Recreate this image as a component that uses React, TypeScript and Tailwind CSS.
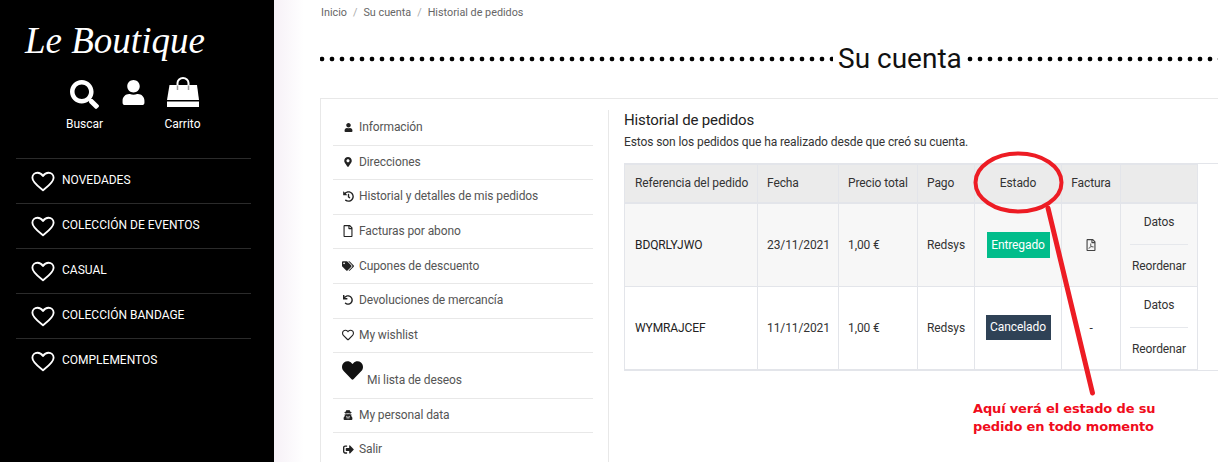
import { FaSearch, FaUser, FaHistory, FaRegFile, FaTags, FaUndo, FaRegHeart, FaHeart, FaUserSecret, FaSignOutAlt, FaRegFilePdf, FaMapMarkerAlt } from "react-icons/fa";

const nav = ["NOVEDADES", "COLECCIÓN DE EVENTOS", "CASUAL", "COLECCIÓN BANDAGE", "COMPLEMENTOS"];

function OutlineHeart() {
  return (
    <svg width="24" height="21" viewBox="0 0 26 22" className="shrink-0">
      <path d="M13 20.500C8 16.500 1.500 12 1.500 7 1.500 3.800 4 1.500 7 1.500c2.600 0 4.600 1.400 6 3.600 1.400-2.200 3.400-3.600 6-3.600 3 0 5.500 2.300 5.500 5.500 0 5-6.500 9.500-11.500 13.500z" fill="none" stroke="#fff" strokeWidth="2" strokeLinejoin="round" />
    </svg>
  );
}

function Bag() {
  return (
    <svg width="32" height="30" viewBox="0 0 32 30">
      <path d="M10.500 9V6a5.500 5 0 0 1 11 0v3" fill="none" stroke="#fff" strokeWidth="2" />
      <path d="M2.500 8H30l2 15H0z" fill="#fff" />
      <path d="M10.500 8.500V13M21.500 8.500V13" stroke="#999" strokeWidth="1.500" />
      <rect x="0" y="24.500" width="32" height="5.500" fill="#fff" />
    </svg>
  );
}

const menu = [
  { icon: <FaUser size={9} />, label: "Información", h: "h-[35px] pb-[2px]" },
  { icon: <FaMapMarkerAlt size={10} />, label: "Direcciones", h: "h-[34px] pb-[2px]" },
  { icon: <FaHistory size={11} />, label: "Historial y detalles de mis pedidos", h: "h-[35px] pb-[2px]" },
  { icon: <FaRegFile size={12} />, label: "Facturas por abono", h: "h-[34px] pb-[2px]" },
  { icon: <FaTags size={12} />, label: "Cupones de descuento", h: "h-[35px]" },
  { icon: <FaUndo size={10} />, label: "Devoluciones de mercancía", h: "h-[35px] pb-[2px]" },
  { icon: <FaRegHeart size={12} />, label: "My wishlist", h: "h-[34px] pb-[2px]" },
];

function Status({ label, cls }: { label: string; cls: string }) {
  return <span className={`inline-block text-white text-center ${cls}`}>{label}</span>;
}

function Actions() {
  return (
    <td className="border border-[#e3e5ea] p-0 px-[9px] text-center">
      <div className="h-[41px] pb-[3px] flex items-center justify-center border-b border-[#e6e8ec]">Datos</div>
      <div className="h-[41px] pt-[2px] flex items-center justify-center">Reordenar</div>
    </td>
  );
}

const td = "border border-[#e3e5ea] px-[9px]";
const first = "border border-[#e3e5ea] pl-[10px]";
const dots = "h-[6px] bg-[radial-gradient(circle,#000_2px,transparent_2.7px)] bg-[length:10px_6px]";

export default function App() {
  return (
    <div className="relative flex h-[462px] w-[1218px] overflow-hidden bg-white font-['Roboto',sans-serif]">
      <aside className="w-[274px] shrink-0 bg-black text-white">
        <div className="pl-[25px] pt-[19px] h-[72px] font-['Liberation_Serif',serif] italic text-[37px] leading-[44px] whitespace-nowrap">Le Boutique</div>
        <div className="flex pl-[60px] text-[12px] h-[86px]">
          <div className="w-[49px] flex flex-col items-center">
            <FaSearch size={29} className="mt-[8px]" />
            <span className="mt-[6px]">Buscar</span>
          </div>
          <div className="w-[49px] flex flex-col items-center">
            <FaUser size={25} className="mt-[8px]" />
          </div>
          <div className="w-[49px] flex flex-col items-center">
            <div className="mt-[5px] h-[30px]"><Bag /></div>
            <span className="mt-[8px]">Carrito</span>
          </div>
        </div>
        <nav className="mx-[16px] w-[235px]">
          {nav.map((n) => (
            <div key={n} className="h-[45px] border-t border-[#2b2b2b] flex items-center gap-[7px] pl-[15px] text-[12px] font-normal">
              <OutlineHeart />
              <span className="-mt-[2px]">{n}</span>
            </div>
          ))}
        </nav>
      </aside>

      <main className="flex-1 min-w-0 bg-[linear-gradient(90deg,#f6f1f7,#ffffff_30px)] pl-[46px]">
        <div className="h-[25px] pt-[5px] pl-[1px] flex gap-[6px] text-[10.800px] leading-[15px] text-[#666]">
          <span>Inicio</span><span className="text-[#aaa]">/</span><span>Su cuenta</span><span className="text-[#aaa]">/</span><span>Historial de pedidos</span>
        </div>
        <div className="h-[48px] mt-[10px] -mb-[1px] flex items-center w-[898px]">
          <div className={`w-[513px] ${dots} bg-[position:-3px_0]`} />
          <h1 className="text-[28px] leading-[40px] text-[#111] px-[5px] whitespace-nowrap">Su cuenta</h1>
          <div className={`flex-1 ${dots} bg-[position:-2px_0]`} />
        </div>
        <div className="mt-[16px] h-[400px] border-t border-l border-[#e8e8e8] flex text-[12px] tracking-[-0.1px] text-[#555]">
          <div className="w-[287px] shrink-0 pl-[12px] pr-[15px] pt-[12px]">
            <div className="w-[260px]">
              {menu.map((m) => (
                <div key={m.label} className={`${m.h} border-b border-[#e8e8e8] flex items-center pl-[9px]`}>
                  <span className="w-[12px] mr-[5px] flex justify-center text-[#222]">{m.icon}</span>
                  <span>{m.label}</span>
                </div>
              ))}
              <div className="h-[46px] border-b border-[#e8e8e8] flex items-end pl-[9px] pb-[11px]">
                <FaHeart size={21} className="text-[#111] mb-[6px] mr-[4px]" />
                <span className="leading-[14px]">Mi lista de deseos</span>
              </div>
              <div className="h-[34px] border-b border-[#e8e8e8] flex items-center pl-[9px] pb-[2px]">
                <span className="w-[12px] mr-[5px] flex justify-center text-[#222]"><FaUserSecret size={10} /></span>
                <span>My personal data</span>
              </div>
              <div className="h-[34px] flex items-center pl-[9px] pb-[2px]">
                <span className="w-[12px] mr-[5px] flex justify-center text-[#222]"><FaSignOutAlt size={11} /></span>
                <span>Salir</span>
              </div>
            </div>
          </div>
          <section className="flex-1 min-w-0 border-l border-[#e8e8e8] mt-[11px] pl-[15px]">
            <h2 className="text-[15px] tracking-[-0.15px] leading-[18px] text-[#222] mt-[1px]">Historial de pedidos</h2>
            <p className="text-[12px] leading-[14px] text-[#333] mt-[6px]">Estos son los pedidos que ha realizado desde que creó su cuenta.</p>
            <div className="mt-[14px] border-y border-[#e3e5ea] text-[#333]">
              <table className="table-fixed border-collapse w-[573px] text-left">
                <colgroup>
                  <col className="w-[133px]" /><col className="w-[81px]" /><col className="w-[79px]" /><col className="w-[57px]" /><col className="w-[87px]" /><col className="w-[59px]" /><col className="w-[77px]" />
                </colgroup>
                <thead>
                  <tr className="h-[38px] bg-[#ebebeb] border-b-2 border-[#e3e5ea] whitespace-nowrap">
                    <th className={`${first} font-normal`}>Referencia del pedido</th>
                    <th className={`${td} font-normal`}>Fecha</th>
                    <th className={`${td} font-normal`}>Precio total</th>
                    <th className={`${td} font-normal`}>Pago</th>
                    <th className={`${td} font-normal text-center`}>Estado</th>
                    <th className={`${td} font-normal text-center`}>Factura</th>
                    <th className={`${td} font-normal`}></th>
                  </tr>
                </thead>
                <tbody>
                  <tr className="h-[83px] bg-[#f7f7f7]">
                    <td className={`${first} text-[#222]`}>BDQRLYJWO</td>
                    <td className={td}>23/11/2021</td>
                    <td className={td}>1,00 €</td>
                    <td className={td}>Redsys</td>
                    <td className={`${td} px-0 text-center`}><Status label="Entregado" cls="w-[63px] bg-[#01bd8b] leading-[26px]" /></td>
                    <td className={`${td}`}><FaRegFilePdf size={12} className="mx-auto text-[#444]" /></td>
                    <Actions />
                  </tr>
                  <tr className="h-[82px]">
                    <td className={`${first} text-[#222]`}>WYMRAJCEF</td>
                    <td className={td}>11/11/2021</td>
                    <td className={td}>1,00 €</td>
                    <td className={td}>Redsys</td>
                    <td className={`${td} px-0 text-center`}><Status label="Cancelado" cls="w-[65px] bg-[#2f4256] leading-[25px]" /></td>
                    <td className={`${td} text-center`}>-</td>
                    <Actions />
                  </tr>
                </tbody>
              </table>
            </div>
          </section>
        </div>
      </main>

      <svg className="absolute left-0 top-0 pointer-events-none" width="1218" height="462">
        <ellipse cx="1018.500" cy="182.500" rx="43" ry="29" fill="none" stroke="#ed1c24" strokeWidth="4" />
        <line x1="1048" y1="208" x2="1092.500" y2="393" stroke="#ed1c24" strokeWidth="5" strokeLinecap="round" />
      </svg>
      <div className="absolute left-[973px] top-[400px] font-['DejaVu_Sans',sans-serif] font-bold text-[13px] tracking-[-0.16px] leading-[18px] text-[#f00c1c] whitespace-nowrap">
        Aquí verá el estado de su<br />pedido en todo momento
      </div>
    </div>
  );
}
